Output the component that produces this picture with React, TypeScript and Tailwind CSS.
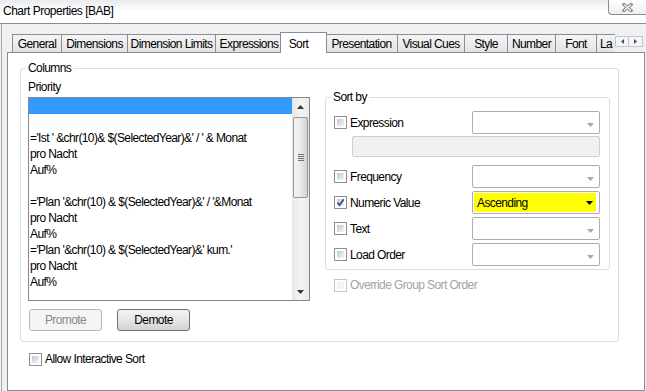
import React from 'react';

const ui = "font-['Liberation_Sans',Arial,sans-serif] text-[12px] tracking-[-0.6px]";

const tabs = [
  { label: 'General', w: 'w-[49px]' },
  { label: 'Dimensions', w: 'w-[66px]' },
  { label: 'Dimension Limits', w: 'w-[88px]' },
  { label: 'Expressions', w: 'w-[67px]' },
  { label: 'Sort', w: 'w-[47px]', active: true },
  { label: 'Presentation', w: 'w-[72px]' },
  { label: 'Visual Cues', w: 'w-[67px]' },
  { label: 'Style', w: 'w-[43px]' },
  { label: 'Number', w: 'w-[48px]' },
  { label: 'Font', w: 'w-[41px]' },
];

const listLines = [
  '',
  "='Ist ' &chr(10)& $(SelectedYear)&' / ' & Monat",
  'pro Nacht',
  'Auf%',
  '',
  "='Plan '&chr(10) & $(SelectedYear)&' / '&Monat",
  'pro Nacht',
  'Auf%',
  "='Plan '&chr(10) & $(SelectedYear)&' kum.'",
  'pro Nacht',
  'Auf%',
  '',
];

function Arrow({ color, up = false }: { color: string; up?: boolean }) {
  return (
    <svg width="7" height="4" viewBox="0 0 7 4">
      <polygon points={up ? '0,4 7,4 3.5,0' : '0,0 7,0 3.5,4'} fill={color} />
    </svg>
  );
}

function Checkbox({ checked = false, disabled = false }: { checked?: boolean; disabled?: boolean }) {
  return (
    <span
      className={`relative flex h-[13px] w-[13px] shrink-0 border bg-white p-[2px] ${
        disabled ? 'border-[#c6c6c6]' : 'border-[#8e8f8f]'
      }`}
    >
      <span
        className={`h-full w-full ${
          disabled ? 'bg-[#f4f4f4]' : 'bg-gradient-to-br from-[#c3c7cd] to-[#f6f6f6]'
        }`}
      />
      {checked && (
        <svg className="absolute left-[1px] top-[1px]" width="9" height="9" viewBox="0 0 9 9">
          <path d="M1.4 4.6 L3.6 7.1 L7.7 1.3" fill="none" stroke="#2f4f96" strokeWidth="1.7" />
        </svg>
      )}
    </span>
  );
}

function Combo({ value, highlight = false }: { value?: string; highlight?: boolean }) {
  return (
    <div className="ml-auto flex h-[23px] w-[128px] rounded-[2px] border border-[#abadb3] bg-white p-[1px]">
      {highlight ? (
        <div className="mr-[2px] flex flex-1 items-center justify-between rounded-[1px] bg-[#ffff00] pl-[3px] pr-[3px]">
          <span>{value}</span>
          <Arrow color="#000" />
        </div>
      ) : (
        <div className="flex flex-1 items-center justify-end pr-[4px] pt-[4px]">
          <Arrow color="#a8a8a8" />
        </div>
      )}
    </div>
  );
}

function SortRow({ label, checked, value, highlight }: { label: string; checked?: boolean; value?: string; highlight?: boolean }) {
  return (
    <div className="flex items-center">
      <Checkbox checked={checked} />
      <span className="ml-[3px]">{label}</span>
      <Combo value={value} highlight={highlight} />
    </div>
  );
}

function Scrollbar() {
  return (
    <div className="flex w-[17px] flex-col bg-gradient-to-r from-[#e6e6e6] via-[#f4f4f4] to-[#e9e9e9]">
      <div className="flex h-[17px] items-center justify-center">
        <Arrow color="#333" up />
      </div>
      <div className="mx-[1px] mt-[2px] flex h-[81px] flex-col items-center justify-center gap-[1px] rounded-[2px] border border-[#969696] bg-gradient-to-r from-[#f4f4f4] via-[#e9e9e9] to-[#d3d3d3]">
        <span className="h-[1px] w-[6px] bg-[#707070]" />
        <span className="h-[1px] w-[6px] bg-[#707070]" />
        <span className="h-[1px] w-[6px] bg-[#707070]" />
        <span className="h-[1px] w-[6px] bg-[#707070]" />
      </div>
      <div className="flex-1" />
      <div className="flex h-[17px] items-center justify-center">
        <Arrow color="#333" />
      </div>
    </div>
  );
}

export default function App() {
  return (
    <div className={`flex h-[391px] w-[646px] flex-col overflow-hidden bg-[#f0f0f0] text-black ${ui}`}>
      {/* title bar */}
      <div className="flex h-[24px] shrink-0 items-start justify-between border-b border-[#8b8b8b] bg-gradient-to-b from-[#e8ebef] via-white to-white">
        <span className="pl-[3px] leading-[23px] tracking-[-0.5px]">Chart Properties [BAB]</span>
        <div className="flex h-[15px] w-[38px] items-center justify-center rounded-bl-[4px] border-b border-l border-[#8d8d8d] bg-gradient-to-b from-white to-[#eceef1]">
          <svg width="11" height="9" viewBox="0 0 11 9">
            <path d="M2 1.5 L9 7.5 M9 1.5 L2 7.5" stroke="#8a8a8a" strokeWidth="3.2" strokeLinecap="square" />
            <path d="M2 1.5 L9 7.5 M9 1.5 L2 7.5" stroke="#f7f7f7" strokeWidth="1.2" />
          </svg>
        </div>
      </div>

      {/* dialog body */}
      <div className="ml-[1px] flex flex-1 flex-col border-l border-[#a9a9a9] pl-[5px]">
        {/* tabs */}
        <div className="mt-[8px] flex h-[20px] items-end pl-[5px]">
          {tabs.map((t) =>
            t.active ? (
              <div
                key={t.label}
                className={`relative z-10 -mx-[2px] -mb-[1px] flex h-[21px] items-start justify-center border border-b-0 border-[#898c95] bg-white pr-[10px] pt-[2px] ${t.w}`}
              >
                {t.label}
              </div>
            ) : (
              <div
                key={t.label}
                className={`flex h-[18px] items-center justify-center whitespace-nowrap border-l border-t border-[#898c95] bg-gradient-to-b from-[#f5f5f5] to-[#e3e3e3] ${t.w}`}
              >
                {t.label}
              </div>
            )
          )}
          <div className="flex h-[18px] w-[19px] items-center whitespace-nowrap border-l border-t border-[#898c95] bg-gradient-to-b from-[#f5f5f5] to-[#e3e3e3] pl-[3px]">
            La
          </div>
          <div className="mb-[5px] flex h-[11px]">
            <div className="flex w-[14px] items-center justify-center border border-[#c3c7cd] bg-[#f4f4f4]">
              <svg width="3" height="5" viewBox="0 0 3 5"><polygon points="3,0 3,5 0,2.5" fill="#3b4d78" /></svg>
            </div>
            <div className="flex w-[14px] items-center justify-center border border-l-0 border-[#c3c7cd] bg-[#f4f4f4]">
              <svg width="3" height="5" viewBox="0 0 3 5"><polygon points="0,0 0,5 3,2.5" fill="#3b4d78" /></svg>
            </div>
          </div>
        </div>

        {/* panel */}
        <div className="flex w-[638px] flex-1 flex-col border border-[#898c95] bg-white">
          <fieldset className="ml-[12px] mt-[8px] w-[599px] rounded-[3px] border border-[#d5dfe5] pb-[10px]">
            <legend className="ml-[5px] px-[2px] leading-[14px]">Columns</legend>
            <div className="flex pt-[5px]">
              {/* left column */}
              <div className="flex w-[289px] flex-col pl-[7px]">
                <span className="leading-[14px]">Priority</span>
                <div className="mt-[3px] flex h-[204px] border border-[#828790] bg-white">
                  <div className="flex-1 overflow-hidden">
                    <div className="h-[16px] bg-[#3399ff]" />
                    {listLines.map((l, i) => (
                      <div key={i} className="h-[16px] whitespace-pre pl-[1px] leading-[16px]">
                        {l}
                      </div>
                    ))}
                  </div>
                  <Scrollbar />
                </div>
                <div className="mt-[8px] flex gap-[15px] pl-[1px]">
                  <button className="h-[22px] w-[73px] rounded-[3px] border border-[#b5b9bc] bg-[#f4f4f4] text-[#8a8a8a]">
                    Promote
                  </button>
                  <button className="h-[22px] w-[73px] rounded-[3px] border border-[#707070] bg-gradient-to-b from-[#f3f3f3] via-[#e6e6e6] to-[#d2d2d2]">
                    Demote
                  </button>
                </div>
              </div>

              {/* right column */}
              <div className="ml-[15px] mt-[10px] flex w-[285px] flex-col">
                <fieldset className="w-[285px] rounded-[3px] border border-[#d5dfe5] pb-[3px] pl-[8px] pr-[9px] pt-[7px]">
                  <legend className="ml-[-3px] px-[2px] leading-[14px]">Sort by</legend>
                  <SortRow label="Expression" />
                  <div className="ml-[18px] mt-[2px] h-[21px] rounded-[2px] border border-[#cfcfcf] bg-[#f0f0f0]" />
                  <div className="mt-[8px] flex flex-col gap-[3px]">
                    <SortRow label="Frequency" />
                    <SortRow label="Numeric Value" checked value="Ascending" highlight />
                    <SortRow label="Text" />
                    <SortRow label="Load Order" />
                  </div>
                </fieldset>
                <div className="mt-[6px] flex items-center pl-[9px]">
                  <Checkbox disabled />
                  <span className="ml-[3px] text-[#a3a3a3]">Override Group Sort Order</span>
                </div>
              </div>
            </div>
          </fieldset>

          <div className="ml-[21px] mt-[8px] flex items-center">
            <Checkbox />
            <span className="ml-[3px]">Allow Interactive Sort</span>
          </div>
        </div>
      </div>
    </div>
  );
}
